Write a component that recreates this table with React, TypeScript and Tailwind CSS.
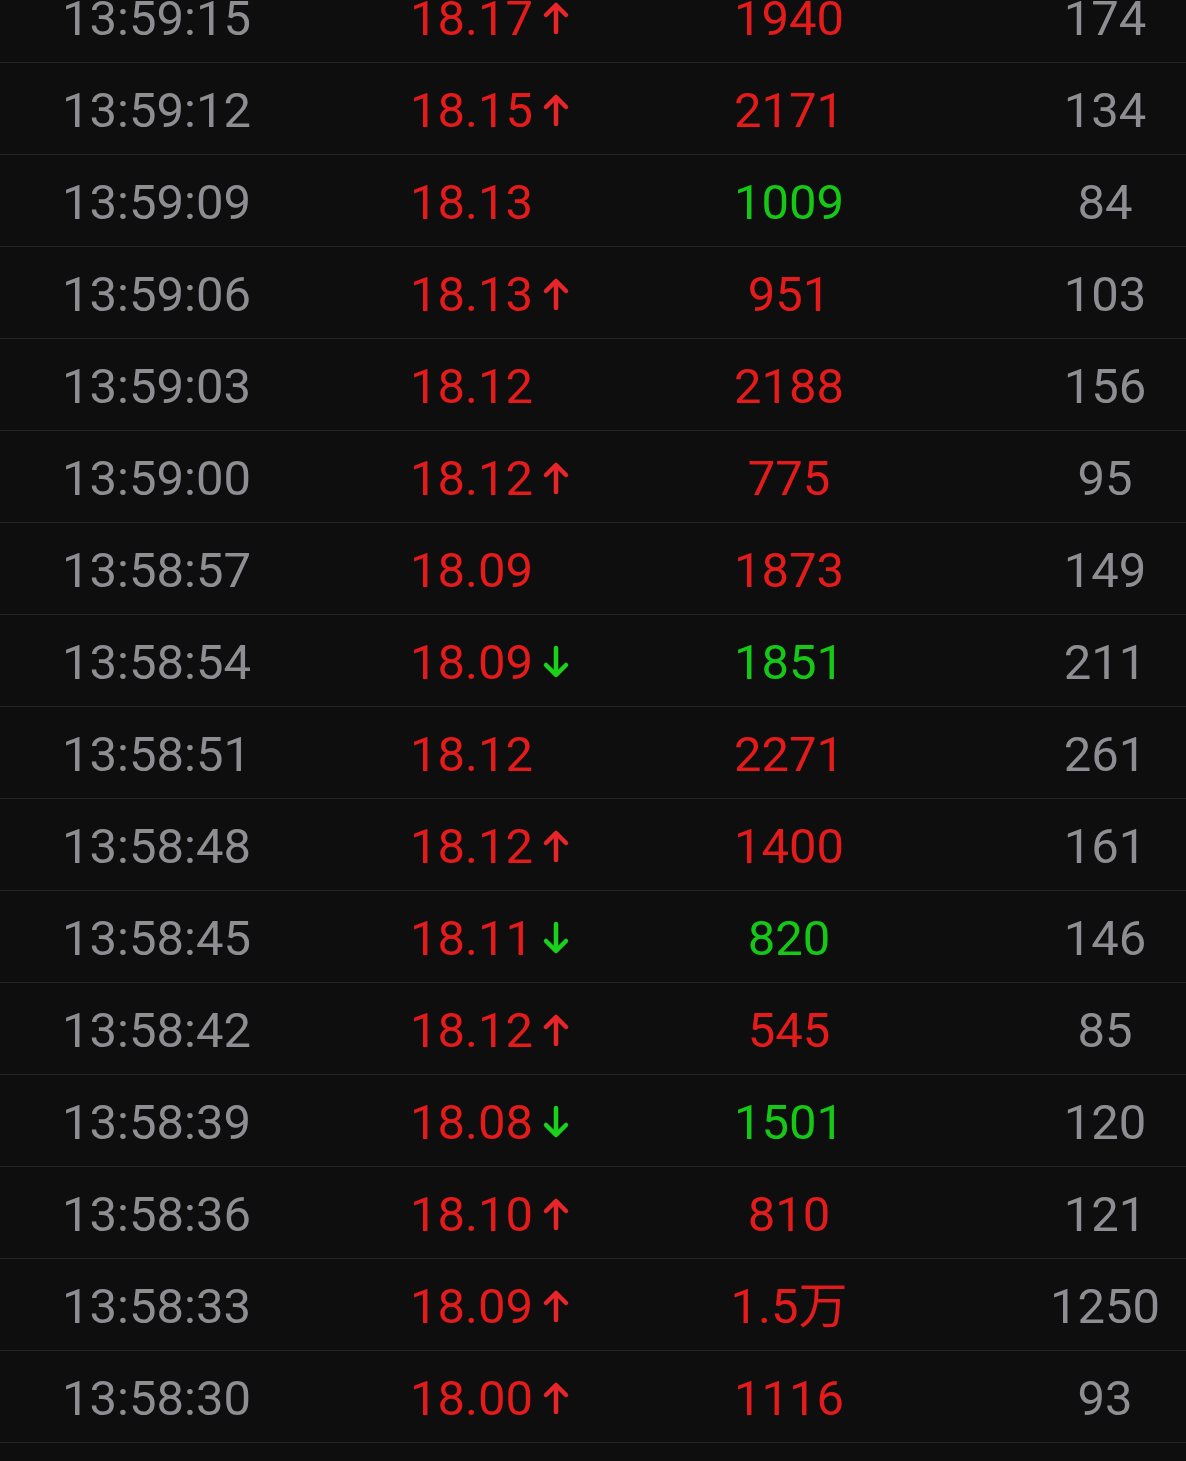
import React from 'react';

type Tick = {
  time: string;
  price: string;
  dir: 'up' | 'down' | null;
  vol: string;
  volUp: boolean;
  count: string;
};

const ticks: Tick[] = [
  { time: '13:59:15', price: '18.17', dir: 'up', vol: '1940', volUp: true, count: '174' },
  { time: '13:59:12', price: '18.15', dir: 'up', vol: '2171', volUp: true, count: '134' },
  { time: '13:59:09', price: '18.13', dir: null, vol: '1009', volUp: false, count: '84' },
  { time: '13:59:06', price: '18.13', dir: 'up', vol: '951', volUp: true, count: '103' },
  { time: '13:59:03', price: '18.12', dir: null, vol: '2188', volUp: true, count: '156' },
  { time: '13:59:00', price: '18.12', dir: 'up', vol: '775', volUp: true, count: '95' },
  { time: '13:58:57', price: '18.09', dir: null, vol: '1873', volUp: true, count: '149' },
  { time: '13:58:54', price: '18.09', dir: 'down', vol: '1851', volUp: false, count: '211' },
  { time: '13:58:51', price: '18.12', dir: null, vol: '2271', volUp: true, count: '261' },
  { time: '13:58:48', price: '18.12', dir: 'up', vol: '1400', volUp: true, count: '161' },
  { time: '13:58:45', price: '18.11', dir: 'down', vol: '820', volUp: false, count: '146' },
  { time: '13:58:42', price: '18.12', dir: 'up', vol: '545', volUp: true, count: '85' },
  { time: '13:58:39', price: '18.08', dir: 'down', vol: '1501', volUp: false, count: '120' },
  { time: '13:58:36', price: '18.10', dir: 'up', vol: '810', volUp: true, count: '121' },
  { time: '13:58:33', price: '18.09', dir: 'up', vol: '1.5万', volUp: true, count: '1250' },
  { time: '13:58:30', price: '18.00', dir: 'up', vol: '1116', volUp: true, count: '93' },
];

const Arrow = ({ dir }: { dir: 'up' | 'down' }) => {
  const up = dir === 'up';
  return (
    <svg
      width="28"
      height="34"
      viewBox="0 0 28 34"
      className={up ? 'text-[#e8262a]' : 'text-[#19d219]'}
      fill="none"
      stroke="currentColor"
      strokeWidth="4.5"
      strokeLinecap="round"
      strokeLinejoin="round"
    >
      {up ? (
        <>
          <path d="M14 5 L14 31" />
          <path d="M4 14 L14 4 L24 14" />
        </>
      ) : (
        <>
          <path d="M14 3 L14 29" />
          <path d="M4 20 L14 30 L24 20" />
        </>
      )}
    </svg>
  );
};

export default function App() {
  return (
    <div
      className="h-[1461px] overflow-hidden bg-[#0e0e0e]"
      style={{ fontFamily: 'Roboto, "Noto Sans CJK SC", sans-serif' }}
    >
      <div className="-mt-[29px]">
        {ticks.map((t, i) => (
          <div
            key={i}
            className="flex h-[92px] items-center border-b border-[#262626] pt-[3px] text-[49px] leading-none"
          >
            <div className="w-[410px] pl-[62px] text-[#8e8e92]">{t.time}</div>
            <div className="flex w-[280px] items-center gap-[9px] text-[#e31b1b]">
              <span>{t.price}</span>
              {t.dir && <Arrow dir={t.dir} />}
            </div>
            <div
              className={`w-[198px] text-center ${
                t.volUp ? 'text-[#e31b1b]' : 'text-[#16c816]'
              }`}
            >
              {t.vol}
            </div>
            <div className="ml-auto w-[162px] text-center text-[#8e8e92]">{t.count}</div>
          </div>
        ))}
      </div>
    </div>
  );
}
